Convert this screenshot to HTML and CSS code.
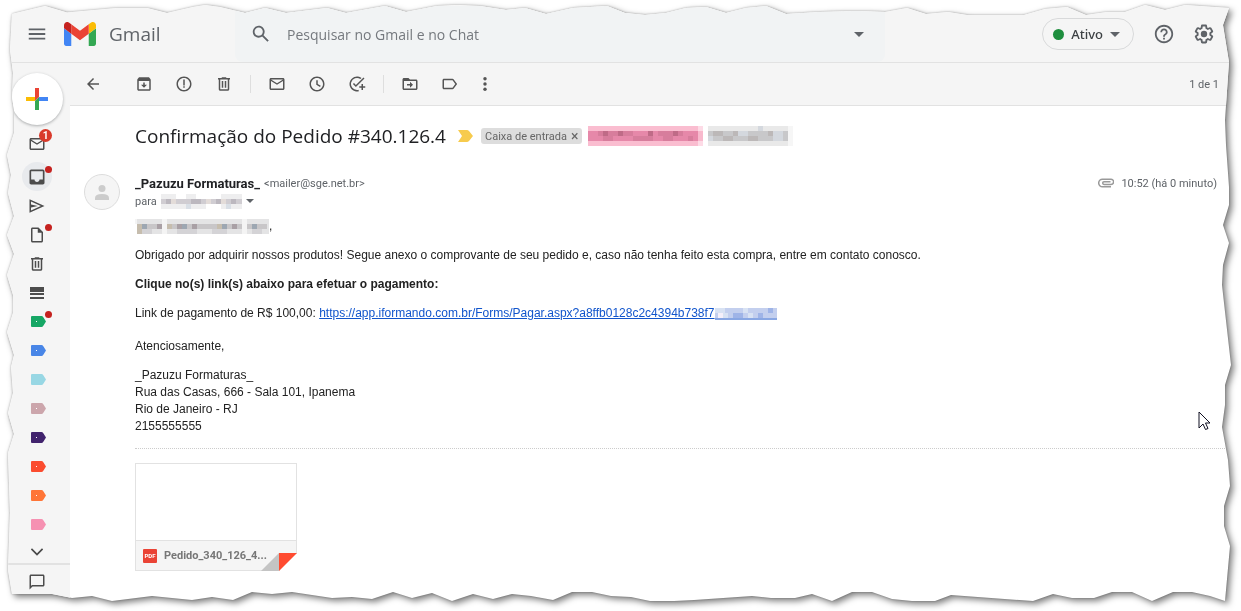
FILE: index.html
```html
<!DOCTYPE html>
<html lang="pt-BR">

<head>
    <meta charset="UTF-8">
    <meta name="viewport" content="width=device-width, initial-scale=1.0">
    <title>Gmail</title>
    <link rel="stylesheet" href="styles.css">
</head>

<body>

    <!-- torn paper outline and shared icons -->
    <svg class="defs" width="0" height="0" aria-hidden="true">
        <clipPath id="torn" clipPathUnits="objectBoundingBox">
            <polygon transform="scale(0.000805802 0.001636661)" points="12,14 20,12 45,6 67,12.5 117,8 147,8 167,13 193,7 205,5 220,7 245,13 265,8 286,13 327,8 346,13 385,6 406,12 437,6 457,5 480,6 506,10 525,8 546,14 573,8 607,6 625,13 645,15 666,13 686,8 706,7 726,13 746,8 766,6 786,14 820,12 857,11 885,12 907,8 926,14 948,12 967,15 1024,15 1045,9 1067,7 1086,15 1107,12 1125,12 1145,5 1165,10 1185,5 1229,8 1223,25 1229,62 1225,120 1226,145 1229,187 1229,205 1223,225 1229,243 1223,265 1222,285 1224,303 1231,365 1225,385 1225,405 1222,427 1228,460 1230,486 1224,506 1224,526 1230,546 1225,601 1210,596 1192,592 1173,592 1152,601 1132,592 1112,592 1094,598 1072,598 1053,594 1033,601 951,595 935,601 912,601 892,599 872,592 852,592 832,601 812,594 795,598 771,598 752,596 694,600 674,601 650,601 631,597 611,596 592,592 572,592 553,600 531,596 512,594 493,599 473,594 452,601 432,593 412,598 393,592 372,599 352,597 332,598 292,592 272,594 252,592 233,600 212,597 192,600 152,596 120,600 112,601 92,596 72,598 52,594 12,594 8,570 10,513 8,453 14,434 8,413 13,393 11,367 14,355 7,332 13,313 13,295 7,275 14,254 7,235 14,216 8,193 11,175 7,155 14,133 14,110 12,97 13,73 10,50" />
        </clipPath>
        <symbol id="i-mail" viewBox="0 0 24 24"><path d="M20 4H4c-1.100 0-2 .9-2 2v12c0 1.100.9 2 2 2h16c1.100 0 2-.9 2-2V6c0-1.100-.9-2-2-2zm0 14H4V8l8 5 8-5v10zm-8-7L4 6h16l-8 5z" /></symbol>
        <symbol id="i-trash" viewBox="0 0 24 24"><path d="M15 4V3H9v1H4v2h1v13c0 1.100.9 2 2 2h10c1.100 0 2-.9 2-2V6h1V4h-5zm2 15H7V6h10v13zM9 8h2v9H9zm4 0h2v9h-2z" /></symbol>
        <symbol id="i-caret" viewBox="0 0 10 5"><path d="M0 0h10L5 5z" /></symbol>
        <symbol id="i-tag" viewBox="0 0 15 11"><path d="M1 0h9.500q1 0 1.500.8L15 5.500l-3 4.700q-.5.800-1.500.8H1q-1 0-1-1V1q0-1 1-1z" /></symbol>
        <symbol id="i-tag-dot" viewBox="0 0 15 11"><path d="M1 0h9.500q1 0 1.500.8L15 5.500l-3 4.700q-.5.800-1.500.8H1q-1 0-1-1V1q0-1 1-1z" /><path fill="#fff" d="M5 5h1v1H5z" /></symbol>
    </svg>

    <div class="shadow">
        <div class="page">

            <header class="header">
                <div class="brand">
                    <button class="icon-btn menu" aria-label="Menu principal"><svg class="icon22" viewBox="0 0 24 24"><path d="M3 18h18v-2H3v2zm0-5h18v-2H3v2zm0-7v2h18V6H3z" /></svg></button>
                    <svg class="logo" viewBox="52 42 88 66">
                        <path fill="#4285f4" d="M58 108h14V74L52 59v43c0 3.320 2.690 6 6 6" />
                        <path fill="#34a853" d="M120 108h14c3.320 0 6-2.690 6-6V59l-20 15" />
                        <path fill="#fbbc04" d="M120 48v26l20-15v-8c0-7.420-8.470-11.650-14.400-7.200" />
                        <path fill="#ea4335" d="M72 74V48l24 18 24-18v26L96 92" />
                        <path fill="#c5221f" d="M52 51v8l20 15V48l-5.600-4.200c-5.940-4.450-14.400-.22-14.400 7.200" />
                    </svg>
                    <span class="brand-name">Gmail</span>
                </div>
                <form class="search">
                    <button type="button" class="icon-btn" aria-label="Pesquisar"><svg class="icon22" viewBox="0 0 24 24"><path d="M20.490 19l-5.730-5.730C15.530 12.200 16 10.910 16 9.500 16 5.910 13.090 3 9.500 3S3 5.910 3 9.500 5.910 16 9.500 16c1.410 0 2.700-.47 3.770-1.240L19 20.490 20.490 19zM5 9.500C5 7.010 7.010 5 9.500 5S14 7.010 14 9.500 11.990 14 9.500 14 5 11.990 5 9.500z" /></svg></button>
                    <input class="search-input" type="text" placeholder="Pesquisar no Gmail e no Chat" aria-label="Pesquisar no Gmail e no Chat">
                    <button type="button" class="icon-btn" aria-label="Opções de pesquisa"><svg class="caret"><use href="#i-caret" /></svg></button>
                </form>
                <div class="account">
                    <button class="status"><span class="status-dot"></span>Ativo<svg class="caret"><use href="#i-caret" /></svg></button>
                    <button class="icon-btn" aria-label="Suporte"><svg class="icon22" viewBox="0 0 24 24"><path d="M11 18h2v-2h-2v2zm1-16C6.480 2 2 6.480 2 12s4.480 10 10 10 10-4.480 10-10S17.520 2 12 2zm0 18c-4.410 0-8-3.590-8-8s3.590-8 8-8 8 3.590 8 8-3.590 8-8 8zm0-14c-2.210 0-4 1.790-4 4h2c0-1.100.9-2 2-2s2 .9 2 2c0 2-3 1.750-3 5h2c0-2.250 3-2.500 3-5 0-2.210-1.790-4-4-4z" /></svg></button>
                    <button class="icon-btn" aria-label="Configurações"><svg class="icon22" viewBox="0 0 24 24"><path d="M13.850 22.250h-3.700c-.74 0-1.360-.54-1.450-1.270l-.27-1.890c-.27-.14-.53-.29-.79-.46l-1.800.720c-.7.260-1.470-.03-1.810-.65L2.200 15.530c-.35-.66-.2-1.440.36-1.880l1.530-1.190c-.01-.15-.02-.3-.02-.46 0-.15.010-.31.020-.46l-1.520-1.190c-.59-.45-.74-1.260-.37-1.880l1.850-3.190c.34-.62 1.110-.9 1.790-.63l1.810.730c.26-.17.520-.32.780-.46l.27-1.910c.090-.7.710-1.250 1.440-1.250h3.700c.74 0 1.360.54 1.450 1.270l.27 1.890c.27.140.53.290.79.460l1.800-.72c.71-.26 1.480.03 1.820.650l1.840 3.180c.36.660.2 1.440-.36 1.880l-1.520 1.190c.010.150.020.300.020.460s-.01.310-.02.460l1.520 1.190c.56.450.72 1.230.37 1.860l-1.860 3.220c-.34.620-1.110.9-1.800.630l-1.800-.72c-.26.170-.52.320-.78.460l-.27 1.910c-.1.680-.72 1.220-1.460 1.220zm-3.230-2h2.760l.37-2.550.53-.22c.44-.18.880-.44 1.340-.78l.45-.34 2.380.96 1.380-2.400-2.030-1.580.07-.56c.03-.26.060-.51.060-.78s-.03-.53-.06-.78l-.07-.56 2.030-1.580-1.390-2.400-2.390.96-.45-.35c-.42-.32-.87-.58-1.330-.77l-.52-.22-.37-2.550h-2.760l-.37 2.550-.53.210c-.44.190-.88.440-1.340.790l-.45.330-2.380-.95-1.390 2.390 2.030 1.580-.07.560a7 7 0 0 0-.06.790c0 .26.020.530.060.780l.07.560-2.030 1.580 1.380 2.400 2.390-.96.450.35c.43.330.86.580 1.330.77l.53.220z" /><circle cx="12" cy="12" r="3.500" /></svg></button>
                </div>
            </header>

            <div class="layout">
                <nav class="side">
                    <button class="compose" aria-label="Escrever"><svg width="22" height="22" viewBox="0 0 22 22"><path fill="#ea4335" d="M9 0h4v9l-4 4z" /><path fill="#fbbc04" d="M0 9h9v4H0z" /><path fill="#34a853" d="M9 13l4-4v13H9z" /><path fill="#4285f4" d="M13 9h9v4h-9z" /></svg></button>
                    <a class="side-item mail" href="#" aria-label="E-mail"><svg class="icon18"><use href="#i-mail" /></svg><span class="badge">1</span></a>
                    <a class="side-item active" href="#" aria-label="Caixa de entrada"><svg class="icon20" viewBox="0 0 24 24"><path d="M19 3H5c-1.100 0-2 .9-2 2v14c0 1.100.9 2 2 2h14c1.100 0 2-.9 2-2V5c0-1.100-.9-2-2-2zm0 12h-4c0 1.660-1.350 3-3 3s-3-1.340-3-3H5V5h14v10z" /></svg><span class="dot"></span></a>
                    <a class="side-item" href="#" aria-label="Enviados"><svg class="icon18" viewBox="0 0 24 24"><path d="M2 3v18l20-9L2 3zm2 11l9-2-9-2V6.090L17.130 12 4 17.910V14z" /></svg></a>
                    <a class="side-item" href="#" aria-label="Rascunhos"><svg class="icon18" viewBox="0 0 24 24"><path d="M14 2H6c-1.100 0-2 .9-2 2v16c0 1.100.9 2 2 2h12c1.100 0 2-.9 2-2V8l-6-6zM6 20V4h7v5h5v11H6z" /></svg><span class="dot"></span></a>
                    <a class="side-item" href="#" aria-label="Lixeira"><svg class="icon18"><use href="#i-trash" /></svg></a>
                    <a class="side-item" href="#" aria-label="Categorias"><svg width="14" height="12"><path d="M0 0h14v5H0zM0 6h14v2H0zM0 10h14v2H0z" /></svg></a>
                    <a class="side-item green" href="#" aria-label="Marcador 1"><svg class="tag"><use href="#i-tag-dot" /></svg><span class="dot"></span></a>
                    <a class="side-item blue" href="#" aria-label="Marcador 2"><svg class="tag"><use href="#i-tag-dot" /></svg></a>
                    <a class="side-item cyan" href="#" aria-label="Marcador 3"><svg class="tag"><use href="#i-tag" /></svg></a>
                    <a class="side-item rose" href="#" aria-label="Marcador 4"><svg class="tag"><use href="#i-tag-dot" /></svg></a>
                    <a class="side-item purple" href="#" aria-label="Marcador 5"><svg class="tag"><use href="#i-tag-dot" /></svg></a>
                    <a class="side-item red" href="#" aria-label="Marcador 6"><svg class="tag"><use href="#i-tag-dot" /></svg></a>
                    <a class="side-item orange" href="#" aria-label="Marcador 7"><svg class="tag"><use href="#i-tag-dot" /></svg></a>
                    <a class="side-item pink" href="#" aria-label="Marcador 8"><svg class="tag"><use href="#i-tag" /></svg></a>
                    <button class="side-item more" aria-label="Mais"><svg class="icon20" viewBox="0 0 24 24"><path d="M12 16.410L4.590 9 6 7.590l6 6 6-6L19.410 9z" /></svg></button>
                    <a class="chat" href="#" aria-label="Chat"><svg class="icon18" viewBox="0 0 24 24"><path d="M20 2H4c-1.100 0-2 .9-2 2v18l4-4h14c1.100 0 2-.9 2-2V4c0-1.100-.9-2-2-2zm0 14H5.170L4 17.170V4h16v12z" /></svg></a>
                </nav>

                <main class="main">
                    <div class="toolbar">
                        <button class="tool back" aria-label="Voltar"><svg class="icon18" viewBox="0 0 24 24"><path d="M20 11H7.830l5.590-5.590L12 4l-8 8 8 8 1.410-1.410L7.830 13H20v-2z" /></svg></button>
                        <button class="tool" aria-label="Arquivar"><svg class="icon18" viewBox="0 0 24 24"><path d="M20.540 5.230l-1.390-1.680C18.880 3.210 18.470 3 18 3H6c-.47 0-.88.210-1.160.550L3.460 5.230C3.170 5.570 3 6.020 3 6.500V19c0 1.100.9 2 2 2h14c1.100 0 2-.9 2-2V6.500c0-.48-.17-.93-.46-1.270zM19 19H5V8h14v11zm-8-9h2v3h3l-4 4-4-4h3z" /></svg></button>
                        <button class="tool" aria-label="Denunciar spam"><svg class="icon18" viewBox="0 0 24 24"><path d="M12 2C6.480 2 2 6.480 2 12s4.480 10 10 10 10-4.480 10-10S17.520 2 12 2zm0 18c-4.410 0-8-3.590-8-8s3.590-8 8-8 8 3.590 8 8-3.590 8-8 8zM11 6h2v8h-2zm0 9h2v2h-2z" /></svg></button>
                        <button class="tool" aria-label="Excluir"><svg class="icon18"><use href="#i-trash" /></svg></button>
                        <span class="sep"></span>
                        <button class="tool" aria-label="Marcar como não lida"><svg class="icon18"><use href="#i-mail" /></svg></button>
                        <button class="tool" aria-label="Adiar"><svg class="icon18" viewBox="0 0 24 24"><path d="M12 2C6.500 2 2 6.500 2 12s4.500 10 10 10 10-4.500 10-10S17.500 2 12 2zm0 18c-4.400 0-8-3.600-8-8s3.600-8 8-8 8 3.600 8 8-3.600 8-8 8zM13 7h-2v6l5 3 1-1.600-4-2.400z" /></svg></button>
                        <button class="tool" aria-label="Adicionar às Tarefas"><svg class="icon18" viewBox="0 0 24 24"><path d="M12 20a8 8 0 1 1 4.500-14.600L18 4A10 10 0 1 0 14.500 21.700l-.5-2A8 8 0 0 1 12 20zM8 10.600l-1.500 1.400 4 4L22 4.700l-1.400-1.400-10.100 10zM18 12v3h-3v2h3v3h2v-3h3v-2h-3v-3z" /></svg></button>
                        <span class="sep"></span>
                        <button class="tool" aria-label="Mover para"><svg class="icon18" viewBox="0 0 24 24"><path d="M20 6h-8l-2-2H4c-1.100 0-2 .9-2 2v12c0 1.100.9 2 2 2h16c1.100 0 2-.9 2-2V8c0-1.100-.9-2-2-2zm0 12H4V8h16v10zM12 9v3H8v2h4v3l4-4z" /></svg></button>
                        <button class="tool" aria-label="Marcadores"><svg class="icon18" viewBox="0 0 24 24"><path d="M17 5.840C16.630 5.330 16.040 5 15.370 5H4c-1.100 0-2 .9-2 2v10c0 1.100.9 2 2 2h11.370c.67 0 1.260-.33 1.630-.84L21.500 12 17 5.840zM15.370 17H4V7h11.370l3.700 5-3.700 5z" /></svg></button>
                        <button class="tool narrow" aria-label="Mais"><svg class="icon18" viewBox="0 0 24 24"><circle cx="12" cy="5" r="2.300" /><circle cx="12" cy="12" r="2.300" /><circle cx="12" cy="19" r="2.300" /></svg></button>
                        <span class="count">1 de 1</span>
                    </div>

                    <div class="subject">
                        <h1>Confirmação do Pedido #340.126.4</h1>
                        <svg class="important" width="15" height="12" viewBox="0 0 15 12"><path d="M0 0h9q1 0 2 1l4 5-4 5q-1 1-2 1H0l4-6z" /></svg>
                        <span class="chip">Caixa de entrada <button aria-label="Remover marcador">×</button></span>
                        <svg class="mosaic" width="115" height="20" shape-rendering="crispEdges">
                            <path fill="#fabdd0" d="M0 0h110v20H0z" /><path fill="#fddbe6" d="M110 0h5v5h-5zM110 15h5v5h-5z" />
                            <path fill="#e688a9" d="M0 5h110v10H0z" /><path fill="#f8b9cd" d="M110 5h5v10h-5z" />
                            <path fill="#d77d9c" d="M10 5h20v5H10zM35 5h10v5H35zM70 5h25v5H70zM15 10h10v5H15zM45 10h20v5H45zM75 10h10v5H75zM100 10h5v5h-5z" />
                            <path fill="#bf6b87" d="M15 5h5v5h-5zM30 5h5v5h-5zM60 5h5v5h-5zM85 5h5v5h-5z" />
                        </svg>
                        <svg class="mosaic" width="85" height="20" shape-rendering="crispEdges">
                            <path fill="#e9e9e9" d="M0 0h80v20H0z" /><path fill="#f6f6f6" d="M80 0h5v20h-5z" />
                            <path fill="#c8c8ca" d="M0 5h80v10H0z" />
                            <path fill="#bcb8b8" d="M5 5h10v5H5zM25 5h5v5h-5zM40 10h10v5H40zM60 5h5v5h-5zM15 10h10v5H15z" />
                            <path fill="#d4d8de" d="M30 5h10v5H30zM65 5h10v10H65zM0 10h5v5H0zM50 0h5v5h-5z" />
                        </svg>
                    </div>

                    <article class="message">
                        <svg class="avatar" viewBox="0 0 36 36"><circle cx="18" cy="18" r="17.500" fill="#f5f5f5" stroke="#dcdcdc" /><circle cx="18" cy="14.500" r="3.500" /><path d="M11 26v-2q0-4 7-4t7 4v2z" /></svg>
                        <div class="content">
                            <div class="from">
                                <strong>_Pazuzu Formaturas_</strong>
                                <span class="address">&lt;mailer@sge.net.br&gt;</span>
                                <span class="time">
                                    <svg width="16" height="10" viewBox="0 0 16 10"><path d="M13 8.800H4.500a3.800 3.800 0 0 1 0-7.600H13a2.600 2.600 0 0 1 0 5.200H6a1.200 1.200 0 0 1 0-2.600h6.500" /></svg>
                                    10:52 (há 0 minuto)
                                </span>
                            </div>
                            <div class="to">
                                para
                                <svg width="81" height="15" shape-rendering="crispEdges">
                                    <path fill="#eeeeef" d="M0 0h81v15H0z" /><path fill="#fff" d="M15 0h10v5H15zM35 0h25v5H35zM45 10h15v5H45z" />
                                    <path fill="#d0cdd2" d="M0 5h81v5H0z" /><path fill="#bcb8bf" d="M5 5h5v5H5zM30 5h10v5H30zM55 5h5v5h-5zM70 5h5v5h-5z" />
                                    <path fill="#e3dcd9" d="M10 5h5v5h-5zM45 5h5v5h-5zM60 5h5v5h-5z" /><path fill="#d9dfe6" d="M25 10h5v5h-5zM65 10h5v5h-5z" />
                                </svg>
                                <button aria-label="Mostrar detalhes"><svg width="8" height="4"><use href="#i-caret" /></svg></button>
                            </div>
                            <div class="text">
                                <div class="greeting"><svg width="134" height="15" shape-rendering="crispEdges">
                                        <path fill="#e4e4e5" d="M2 0h132v15H2z" /><path fill="#f4f4f4" d="M0 0h2v5H0zM27 0h5v15h-5zM107 0h5v15h-5z" />
                                        <path fill="#c8c6c8" d="M2 5h25v5H2zM32 5h75v5H32zM112 5h20v5h-20z" />
                                        <path fill="#d4d3d6" d="M7 10h10v5H7zM42 10h20v5H42zM77 10h15v5H77zM117 10h10v5h-10z" />
                                        <path fill="#9da7b2" d="M7 5h5v5H7zM47 5h5v5h-5zM87 5h5v5h-5zM117 5h5v5h-5z" />
                                        <path fill="#a9a0a5" d="M22 5h5v5h-5zM42 5h5v5h-5zM57 5h5v5h-5zM97 5h5v5h-5z" />
                                        <path fill="#c6bdae" d="M2 5h5v10H2zM32 5h5v5h-5zM82 5h5v5h-5z" />
                                    </svg>,</div>
                                <p>Obrigado por adquirir nossos produtos! Segue anexo o comprovante de seu pedido e, caso não tenha feito esta compra, entre em contato conosco.</p>
                                <p><b>Clique no(s) link(s) abaixo para efetuar o pagamento:</b></p>
                                <p>Link de pagamento de R$ 100,00: <a href="#">https://app.iformando.com.br/Forms/Pagar.aspx?a8ffb0128c2c4394b738f7<svg width="62" height="12" shape-rendering="crispEdges">
                                            <path fill="#c3cfee" d="M0 0h62v12H0z" /><path fill="#89a7e3" d="M0 10h62v2H0z" />
                                            <path fill="#d8e2f3" d="M0 0h10v5H0zM28 0h5v5h-5zM8 5h5v5H8zM33 5h5v5h-5z" /><path fill="#f5f0fa" d="M3 5h5v5H3z" />
                                            <path fill="#9fb4e7" d="M18 5h5v5h-5zM23 5h5v5h-5zM53 0h5v5h-5zM43 5h5v5h-5z" />
                                        </svg></a></p>
                                <p class="closing">Atenciosamente,</p>
                                <p>_Pazuzu Formaturas_<br>Rua das Casas, 666 - Sala 101, Ipanema<br>Rio de Janeiro - RJ<br>2155555555</p>
                            </div>
                            <div class="attachments">
                                <a class="file" href="#">
                                    <span class="preview"></span>
                                    <span class="file-bar"><span class="pdf">PDF</span>Pedido_340_126_4...</span>
                                    <svg class="fold" width="36" height="18"><path fill="#c4c4c4" d="M0 18L18 0v18z" /><path fill="#fff" d="M36 0v18H18z" /><path fill="#ff4b30" d="M18 0h18L18 18z" /></svg>
                                </a>
                            </div>
                        </div>
                    </article>
                </main>
            </div>

            <svg class="pointer" width="13" height="20" viewBox="0 0 13 20"><path fill="#fff" stroke="#111122" d="M1 1v16l4-4 2.500 5.500 2.500-1-2.500-5.500h4.500z" /></svg>
        </div>
    </div>

</body>

</html>
```
FILE: styles.css
```css
* {
    box-sizing: border-box;
}

body {
    margin: 0;
    background: #fff;
    font-family: Roboto, "Liberation Sans", sans-serif;
    font-size: 11px;
    color: #5f6368;
}

button {
    padding: 0;
    border: 0;
    background: none;
    color: inherit;
    font: inherit;
}

svg {
    display: block;
    fill: currentColor;
    flex: none;
}

.defs {
    position: absolute;
}

.shadow {
    filter: drop-shadow(0 0 1px rgba(0, 0, 0, 0.25)) drop-shadow(3px 3px 3px rgba(0, 0, 0, 0.5));
}

.page {
    position: relative;
    display: flex;
    flex-direction: column;
    min-height: 100vh;
    background: #fff;
    clip-path: url(#torn);
}

.icon18 {
    width: 18px;
    height: 18px;
}

.icon20 {
    width: 20px;
    height: 20px;
}

.icon22 {
    width: 22px;
    height: 22px;
}

.caret {
    width: 10px;
    height: 5px;
}

/* header */
.header {
    display: flex;
    align-items: center;
    height: 63px;
    padding-top: 6px;
    background: #f5f5f5;
    border-bottom: 1px solid #e2e2e2;
}

.brand {
    display: flex;
    align-items: center;
    width: 235px;
    padding-left: 17px;
}

.icon-btn {
    display: flex;
    align-items: center;
    justify-content: center;
    width: 40px;
    height: 40px;
}

.logo {
    width: 32px;
    height: 24px;
    margin: 0 13px 0 7px;
}

.brand-name {
    font-family: "Open Sans", sans-serif;
    font-size: 19px;
}

.search {
    display: flex;
    flex: 1;
    align-items: center;
    height: 56px;
    padding: 0 6px;
    background: #f1f3f4;
    border-radius: 8px;
}

.search-input {
    flex: 1;
    min-width: 0;
    padding: 0 6px;
    border: 0;
    outline: 0;
    background: none;
    font-family: "Open Sans", sans-serif;
    font-size: 14px;
}

.search-input::placeholder {
    color: #75797e;
    opacity: 1;
}

.account {
    display: flex;
    align-items: center;
    justify-content: flex-end;
    width: 356px;
    padding-right: 17px;
}

.status {
    display: flex;
    align-items: center;
    gap: 7px;
    height: 32px;
    margin-right: 10px;
    padding: 0 13px 0 10px;
    border: 1px solid #d8d9da;
    border-radius: 16px;
    color: #3c4043;
    font-family: "Noto Sans", sans-serif;
    font-size: 13px;
    font-weight: 500;
}

.status .caret {
    color: #5f6368;
}

.status-dot {
    width: 11px;
    height: 11px;
    border-radius: 50%;
    background: #1e8e3e;
}

/* sidebar */
.layout {
    display: flex;
    flex: 1;
}

.side {
    display: flex;
    flex-direction: column;
    align-items: stretch;
    width: 70px;
    padding-top: 10px;
    background: #f5f5f5;
    color: #4c4c4c;
}

.compose {
    display: flex;
    align-items: center;
    justify-content: center;
    width: 52px;
    height: 52px;
    margin-left: 11px;
    border-radius: 50%;
    background: #fff;
    box-shadow: 0 1px 3px rgba(60, 64, 67, 0.4);
}

.side-item {
    position: relative;
    display: flex;
    align-items: center;
    justify-content: center;
    width: 30px;
    height: 29px;
    margin-left: 22px;
    color: inherit;
}

.mail {
    margin-top: 4px;
    margin-bottom: 4px;
}

.active {
    border-radius: 50%;
    background: #e8eaed;
}

.more {
    height: 24px;
    padding-top: 2px;
}

.tag {
    width: 15px;
    height: 11px;
    margin-left: 3px;
}

.badge {
    position: absolute;
    top: 0;
    right: 0;
    width: 13px;
    height: 13px;
    border-radius: 50%;
    background: #d93a2b;
    color: #fff;
    font-size: 10px;
    font-weight: 700;
    line-height: 13px;
    text-align: center;
}

.dot {
    position: absolute;
    top: 4px;
    right: 0;
    width: 7px;
    height: 7px;
    border-radius: 50%;
    background: #c5221f;
}

.green { color: #16a765; }
.blue { color: #4986e7; }
.cyan { color: #98d7e4; }
.rose { color: #cca6ac; }
.purple { color: #41236d; }
.red { color: #fb4c2f; }
.orange { color: #ff7537; }
.pink { color: #f691b2; }

.chat {
    display: flex;
    align-items: center;
    justify-content: center;
    height: 36px;
    padding-left: 4px;
    border-top: 2px solid #e2e2e2;
    color: inherit;
}

/* toolbar */
.main {
    flex: 1;
    min-width: 0;
}

.toolbar {
    display: flex;
    align-items: center;
    height: 43px;
    padding: 0 22px 0 3px;
    background: #f5f5f5;
    border-bottom: 1px solid #e2e2e2;
    color: #555;
}

.tool {
    display: flex;
    align-items: center;
    justify-content: center;
    width: 40px;
    height: 40px;
}

.back {
    margin-right: 11px;
}

.narrow {
    width: 30px;
}

.sep {
    width: 1px;
    height: 18px;
    margin: 0 6px;
    background: #dedede;
}

.count {
    margin-left: auto;
    color: #5f6368;
}

/* subject */
.subject {
    display: flex;
    align-items: center;
    height: 60px;
    padding-left: 65px;
}

.subject h1 {
    margin: 0;
    color: #202124;
    font-family: "Open Sans", sans-serif;
    font-size: 19px;
    font-weight: 400;
}

.important {
    margin: 0 8px 0 12px;
    color: #f7cb4d;
}

.chip {
    display: flex;
    align-items: center;
    gap: 4px;
    height: 16px;
    margin-right: 6px;
    padding: 0 4px;
    border-radius: 3px;
    background: #ddd;
    color: #666;
}

.chip button {
    font-size: 14px;
    line-height: 16px;
}

.mosaic {
    margin-right: 5px;
}

/* message */
.message {
    display: grid;
    grid-template-columns: 65px 1fr;
    padding-top: 8px;
}

.avatar {
    width: 36px;
    height: 36px;
    margin-left: 14px;
    color: #ccc;
}

.from,
.to {
    display: flex;
    align-items: center;
    gap: 4px;
    height: 18px;
}

.from {
    padding-right: 24px;
}

.from strong {
    color: #202124;
    font-size: 13px;
}

.time {
    display: flex;
    align-items: center;
    gap: 7px;
    margin-left: auto;
}

.time svg {
    fill: none;
    stroke: #999;
    stroke-width: 1.5;
}

.text {
    padding-top: 8px;
    color: #222;
    font-family: "Liberation Sans", Arial, sans-serif;
    font-size: 12px;
    line-height: 17px;
}

.greeting {
    display: flex;
    align-items: center;
    height: 17px;
}

.text p {
    margin: 12px 0 0;
}

.text a {
    color: #15c;
}

.text a svg {
    display: inline-block;
    vertical-align: -3px;
}

.text .closing {
    margin-top: 16px;
}

.attachments {
    margin-top: 13px;
    padding-top: 14px;
    border-top: 1px dotted #ccc;
}

.file {
    position: relative;
    display: block;
    width: 162px;
    border: 1px solid #e2e2e2;
    color: #777;
    font-weight: 700;
    text-decoration: none;
}

.preview {
    display: block;
    height: 76px;
}

.file-bar {
    display: flex;
    align-items: center;
    gap: 7px;
    height: 30px;
    padding-left: 7px;
    background: #f5f5f5;
    border-top: 1px solid #e2e2e2;
}

.pdf {
    width: 14px;
    height: 14px;
    border-radius: 1px;
    background: #ea4335;
    color: #fff;
    font-size: 6px;
    line-height: 14px;
    text-align: center;
}

.fold {
    position: absolute;
    right: -1px;
    bottom: -1px;
}

/* mouse pointer over the message */
.pointer {
    position: absolute;
    top: 411px;
    right: 30px;
}
```
